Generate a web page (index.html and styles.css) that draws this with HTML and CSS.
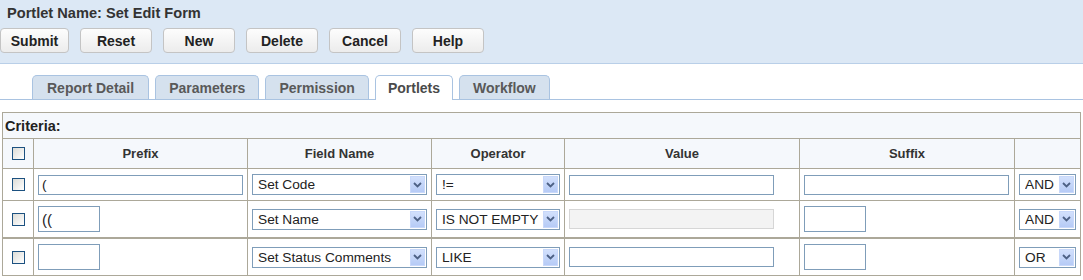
FILE: index.html
```html
<!DOCTYPE html>
<html lang="en">
<head>
    <meta charset="UTF-8">
    <title>Set Edit Form</title>
    <link rel="stylesheet" href="styles.css">
</head>
<body>
    <div class="portlet-head">
        <div class="portlet-title">Portlet Name: Set Edit Form</div>
        <div class="toolbar">
            <button class="btn btn-first">Submit</button>
            <button class="btn">Reset</button>
            <button class="btn">New</button>
            <button class="btn">Delete</button>
            <button class="btn">Cancel</button>
            <button class="btn">Help</button>
        </div>
    </div>

    <ul class="tabs">
        <li class="tab">Report Detail</li>
        <li class="tab">Parameters</li>
        <li class="tab">Permission</li>
        <li class="tab active">Portlets</li>
        <li class="tab">Workflow</li>
    </ul>

    <table class="criteria">
        <colgroup>
            <col class="c-check">
            <col class="c-prefix">
            <col class="c-field">
            <col class="c-op">
            <col class="c-value">
            <col class="c-suffix">
            <col class="c-join">
        </colgroup>
        <tr class="caption-row">
            <th colspan="7">Criteria:</th>
        </tr>
        <tr class="head-row">
            <th><input type="checkbox" class="chk"></th>
            <th>Prefix</th>
            <th>Field Name</th>
            <th>Operator</th>
            <th>Value</th>
            <th>Suffix</th>
            <th></th>
        </tr>
        <tr>
            <td class="cell-check"><input type="checkbox" class="chk"></td>
            <td><input type="text" class="txt txt-wide" value="("></td>
            <td>
                <span class="combo"><select><option>Set Code</option></select><span class="combo-arrow"><svg width="9" height="6" viewBox="0 0 9 6"><path d="M1 1l3.5 3.5L8 1" fill="none" stroke="#4d6185" stroke-width="1.8"/></svg></span></span>
            </td>
            <td>
                <span class="combo"><select><option>!=</option></select><span class="combo-arrow"><svg width="9" height="6" viewBox="0 0 9 6"><path d="M1 1l3.5 3.5L8 1" fill="none" stroke="#4d6185" stroke-width="1.8"/></svg></span></span>
            </td>
            <td><input type="text" class="txt txt-wide"></td>
            <td><input type="text" class="txt txt-wide"></td>
            <td>
                <span class="combo"><select><option>AND</option></select><span class="combo-arrow"><svg width="9" height="6" viewBox="0 0 9 6"><path d="M1 1l3.5 3.5L8 1" fill="none" stroke="#4d6185" stroke-width="1.8"/></svg></span></span>
            </td>
        </tr>
        <tr>
            <td class="cell-check"><input type="checkbox" class="chk"></td>
            <td><input type="text" class="txt txt-short" value="(("></td>
            <td>
                <span class="combo"><select><option>Set Name</option></select><span class="combo-arrow"><svg width="9" height="6" viewBox="0 0 9 6"><path d="M1 1l3.5 3.5L8 1" fill="none" stroke="#4d6185" stroke-width="1.8"/></svg></span></span>
            </td>
            <td>
                <span class="combo"><select><option>IS NOT EMPTY</option></select><span class="combo-arrow"><svg width="9" height="6" viewBox="0 0 9 6"><path d="M1 1l3.5 3.5L8 1" fill="none" stroke="#4d6185" stroke-width="1.8"/></svg></span></span>
            </td>
            <td><input type="text" class="txt txt-wide" disabled></td>
            <td><input type="text" class="txt txt-short"></td>
            <td>
                <span class="combo"><select><option>AND</option></select><span class="combo-arrow"><svg width="9" height="6" viewBox="0 0 9 6"><path d="M1 1l3.5 3.5L8 1" fill="none" stroke="#4d6185" stroke-width="1.8"/></svg></span></span>
            </td>
        </tr>
        <tr class="row-split">
            <td class="cell-check"><input type="checkbox" class="chk"></td>
            <td><input type="text" class="txt txt-short"></td>
            <td>
                <span class="combo"><select><option>Set Status Comments</option></select><span class="combo-arrow"><svg width="9" height="6" viewBox="0 0 9 6"><path d="M1 1l3.5 3.5L8 1" fill="none" stroke="#4d6185" stroke-width="1.8"/></svg></span></span>
            </td>
            <td>
                <span class="combo"><select><option>LIKE</option></select><span class="combo-arrow"><svg width="9" height="6" viewBox="0 0 9 6"><path d="M1 1l3.5 3.5L8 1" fill="none" stroke="#4d6185" stroke-width="1.8"/></svg></span></span>
            </td>
            <td><input type="text" class="txt txt-wide"></td>
            <td><input type="text" class="txt txt-short"></td>
            <td>
                <span class="combo"><select><option>OR</option></select><span class="combo-arrow"><svg width="9" height="6" viewBox="0 0 9 6"><path d="M1 1l3.5 3.5L8 1" fill="none" stroke="#4d6185" stroke-width="1.8"/></svg></span></span>
            </td>
        </tr>
    </table>
</body>
</html>
```

FILE: styles.css
```css
body {
    margin: 0;
    font-family: "Liberation Sans", Arial, sans-serif;
    background-color: #ffffff;
    color: #222;
}
.portlet-head {
    background-color: #dce8f5;
    border-bottom: 1px solid #b9cfe8;
    padding: 5px 0 10px 0;
}
.portlet-title {
    font-size: 14.6px;
    font-weight: bold;
    line-height: 16px;
    color: #333;
    padding-left: 7px;
}
.toolbar {
    display: flex;
    gap: 11px;
    margin-top: 7px;
}
.btn {
    width: 72px;
    height: 25px;
    padding: 0;
    font-family: inherit;
    font-size: 14px;
    font-weight: bold;
    color: #222;
    background: linear-gradient(#fdfdfd, #ececec);
    border: 1px solid #c4c4c4;
    border-radius: 4px;
}
.btn-first {
    width: 69px;
}
.tabs {
    list-style: none;
    display: flex;
    gap: 6px;
    margin: 11px 0 0 0;
    padding: 0 0 0 32px;
    border-bottom: 1px solid #a9c3e1;
    height: 24px;
}
.tab {
    height: 23px;
    line-height: 24px;
    padding: 0 13px;
    font-size: 14px;
    font-weight: bold;
    color: #595959;
    background-color: #d5e1ee;
    border: 1px solid #a9c3e1;
    border-bottom: none;
    border-radius: 5px 5px 0 0;
}
.tab:first-child {
    padding: 0 14px;
}
.tab.active {
    background-color: #fff;
    height: 24px;
    color: #4a4a4a;
    padding: 0 12px;
}
.criteria {
    margin: 12px 0 0 2px;
    width: 1079px;
    table-layout: fixed;
    border-collapse: collapse;
}
.criteria th,
.criteria td {
    border: 1px solid #aca899;
    padding: 5px 4px;
    vertical-align: middle;
}
.c-check { width: 31px; }
.c-prefix { width: 214px; }
.c-field { width: 184px; }
.c-op { width: 133px; }
.c-value { width: 235px; }
.c-suffix { width: 215px; }
.c-join { width: 66px; }
.caption-row th {
    background-color: #f5f8fc;
    text-align: left;
    font-size: 14.5px;
    color: #222;
    padding: 4px 2px;
    height: 17px;
}
.head-row th {
    background-color: #f5f8fc;
    font-size: 13px;
    color: #333;
    height: 19px;
    padding: 5px 4px;
}
.head-row th:first-child,
.cell-check {
    text-align: center;
    padding: 0;
}
.row-split td {
    border-top: 2px solid #aca899;
}
.chk {
    appearance: none;
    -webkit-appearance: none;
    display: block;
    margin: 0 auto;
    width: 13px;
    height: 13px;
    border: 1px solid #1c5180;
    background: linear-gradient(135deg, #dcdcd7, #ffffff);
}
.txt {
    display: block;
    box-sizing: border-box;
    margin: 0;
    font-family: inherit;
    border: 1px solid #7f9db9;
    background: #fff;
    color: #222;
    padding: 0 3px;
}
.txt-wide {
    width: 205px;
    height: 20px;
    font-size: 13.7px;
}
.txt-short {
    width: 62px;
    height: 26px;
    font-size: 15px;
}
.txt:disabled {
    background-color: #f3f3f3;
    border-color: #d6d6d6;
}
.combo {
    display: flex;
    box-sizing: border-box;
    width: 100%;
    height: 21px;
    border: 1px solid #7f9db9;
    background: #fff;
    padding: 1px;
}
.combo select {
    appearance: none;
    -webkit-appearance: none;
    flex: 1;
    min-width: 0;
    border: none;
    outline: none;
    background: transparent;
    font-family: inherit;
    font-size: 13.7px;
    color: #222;
    padding: 0 0 0 4px;
    margin: 0;
}
.combo-arrow {
    width: 15px;
    display: flex;
    align-items: center;
    justify-content: center;
    background: linear-gradient(#d2e0fc, #b6cbf6);
    border: 1px solid #c8d8fa;
    box-sizing: border-box;
}
```
